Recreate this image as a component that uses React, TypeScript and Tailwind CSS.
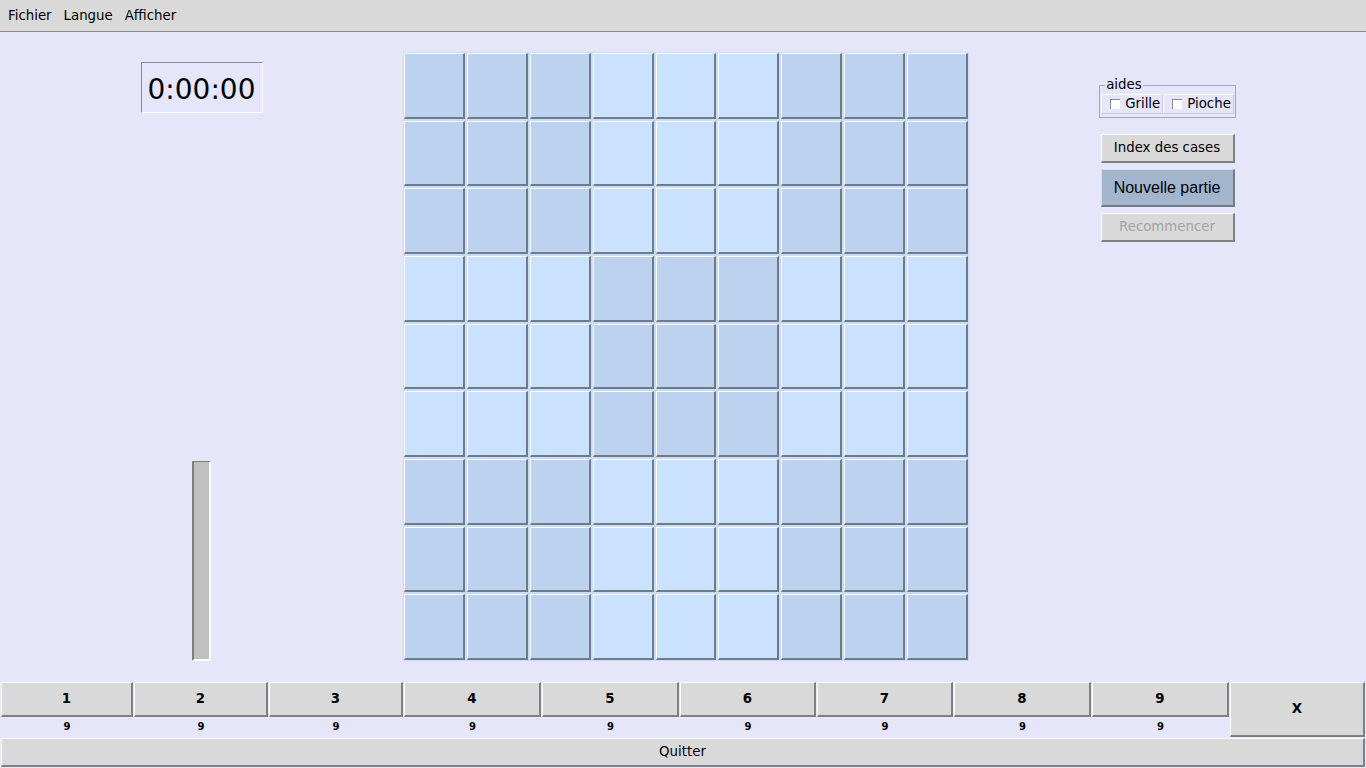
import { useState } from 'react';

const DARK = 'bg-[#bcd2ee]';
const LIGHT = 'bg-[#cae1ff]';

const columns = [
  { n: '1', w: 'w-[133px]' },
  { n: '2', w: 'w-[135px]' },
  { n: '3', w: 'w-[135px]' },
  { n: '4', w: 'w-[138px]' },
  { n: '5', w: 'w-[138px]' },
  { n: '6', w: 'w-[137px]' },
  { n: '7', w: 'w-[137px]' },
  { n: '8', w: 'w-[138px]' },
  { n: '9', w: 'w-[138px]' },
];

const raised =
  'bg-[#d9d9d9] border-t border-l border-t-white border-l-white border-b-2 border-r-2 border-b-[#808080] border-r-[#808080]';

function Cell({ r, c }: { r: number; c: number }) {
  const dark = (Math.floor(r / 3) + Math.floor(c / 3)) % 2 === 0;
  return (
    <div
      className={`${dark ? DARK : LIGHT} border-t border-l border-t-white border-l-white border-b-2 border-r-2 border-b-[#6e7b8b] border-r-[#6e7b8b]`}
    />
  );
}

function Check({ label, checked, onChange }: { label: string; checked: boolean; onChange: () => void }) {
  return (
    <button
      onClick={onChange}
      className="h-[20px] flex items-center gap-[5px] pl-[8px] pr-[2px] border-t border-l border-t-white border-l-white border-b border-r border-b-[#c9c9d9] border-r-[#c9c9d9]"
    >
      <span className="w-[10px] h-[10px] bg-white border-t border-l border-[#8b8b8b] border-b-white border-r-white flex items-center justify-center text-[9px] leading-none">
        {checked ? '✓' : ''}
      </span>
      <span>{label}</span>
    </button>
  );
}

export default function App() {
  const [grille, setGrille] = useState(false);
  const [pioche, setPioche] = useState(false);

  return (
    <div className="w-[1366px] h-[768px] bg-[#e6e6fa] flex flex-col overflow-hidden text-black font-['DejaVu_Sans',sans-serif] text-[13.33px]">
      {/* menu */}
      <div className="h-[32px] bg-[#d9d9d9] border-b border-[#8a8a8a] flex items-center pl-[8px] gap-[12px] text-[13.33px]">
        <span>Fichier</span>
        <span>Langue</span>
        <span>Afficher</span>
      </div>

      <div className="h-[648px] flex">
        {/* left column */}
        <div className="w-[403px] flex flex-col items-center">
          <div className="mt-[30px] w-[122px] h-[51px] border border-t-[#8b8b8b] border-l-[#8b8b8b] border-b-white border-r-white flex items-center justify-center pt-[5px] text-[28px]">
            0:00:00
          </div>
          <div className="flex-1" />
          <div className="mb-[19px] w-[19px] h-[200px] bg-[#c0c0c0] border-t border-l-2 border-t-[#7f7f7f] border-l-[#7f7f7f] border-b-2 border-r-2 border-b-white border-r-white" />
        </div>

        {/* board */}
        <div className="mt-[20px] w-[566px] h-[609px] bg-[#c8dcf6] p-[1px] grid grid-cols-9 grid-rows-9 gap-[2px]">
          {Array.from({ length: 81 }).map((_, i) => (
            <Cell key={i} r={Math.floor(i / 9)} c={i % 9} />
          ))}
        </div>

        {/* right column */}
        <div className="flex-1 flex flex-col items-center pt-[45px]">
          <fieldset className="w-[134px] border border-[#a6a6b6] px-[1px] pb-[3px]">
            <legend className="ml-[4px] px-[1px] leading-[16px]">aides</legend>
            <div className="flex mt-[1px]">
              <Check label="Grille" checked={grille} onChange={() => setGrille(!grille)} />
              <Check label="Pioche" checked={pioche} onChange={() => setPioche(!pioche)} />
            </div>
          </fieldset>
          <button className={`mt-[16px] w-[134px] h-[29px] ${raised}`}>Index des cases</button>
          <button className="mt-[6px] w-[134px] h-[38px] bg-[#a2b5cd] border-t border-l border-t-[#d0dcea] border-l-[#d0dcea] border-b-2 border-r-2 border-b-[#6e7b8b] border-r-[#6e7b8b] font-['Liberation_Sans',sans-serif] text-[16px]">
            Nouvelle partie
          </button>
          <button disabled className={`mt-[6px] w-[134px] h-[29px] ${raised} text-[#a3a3a3]`}>
            Recommencer
          </button>
        </div>
      </div>

      {/* number pad */}
      <div className="h-[58px] pt-[2px] flex">
        {columns.map((col) => (
          <div key={col.n} className={`${col.w} h-[55px] pl-[1px] flex flex-col`}>
            <button className={`h-[35px] ${raised} font-bold text-[13.33px]`}>{col.n}</button>
            <div className="flex-1 flex items-center justify-center font-bold text-[10px] pb-[1px]">9</div>
          </div>
        ))}
        <div className="flex-1 h-[55px] pl-[1px] pr-[1px]">
          <button className={`w-full h-full ${raised} font-bold text-[13.33px]`}>X</button>
        </div>
      </div>

      <div className="px-[1px]">
        <button className={`w-full h-[29px] ${raised}`}>Quitter</button>
      </div>
    </div>
  );
}
